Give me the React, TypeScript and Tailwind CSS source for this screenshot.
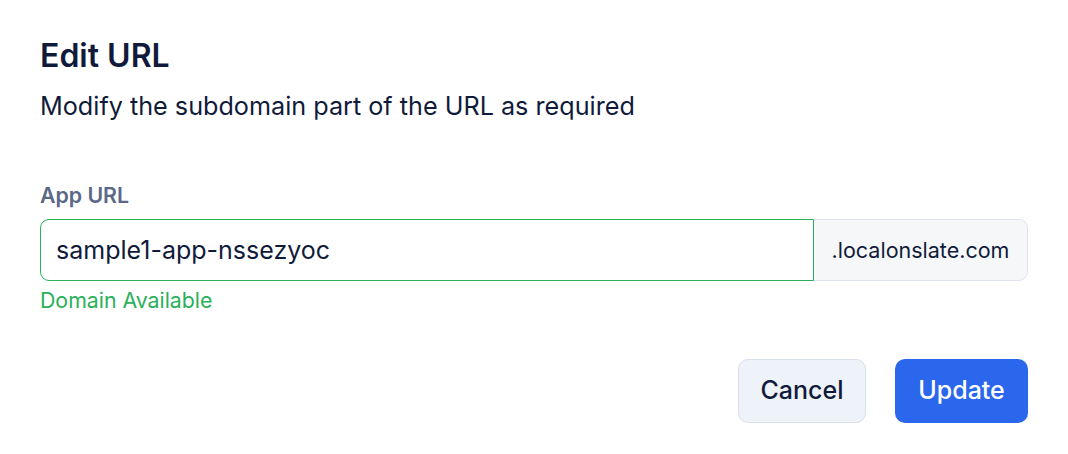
export default function App() {
  return (
    <main
      className="bg-white w-[1068px] h-[454px] px-10 pt-[36px] text-[#101b3b]"
      style={{ fontFamily: "Inter, 'Noto Sans', sans-serif" }}
    >
      {/* header */}
      <h1 className="text-[32px] leading-[40px] font-semibold">Edit URL</h1>
      <p className="mt-[14px] text-[25.2px] leading-[32px]">
        Modify the subdomain part of the URL as required
      </p>

      {/* field */}
      <div className="mt-[59px]">
        <label className="block text-[21.3px] leading-[28px] font-semibold text-[#5b6887]">
          App URL
        </label>
        <div className="mt-[10px] flex h-[62px]">
          <input
            className="flex-1 min-w-0 h-full rounded-l-[9px] border border-[#2bb05a] px-[15px] text-[25px] text-[#101b3b] outline-none"
            defaultValue="sample1-app-nssezyoc"
          />
          <div className="w-[214px] h-full flex items-center justify-center rounded-r-[9px] border border-l-0 border-[#dde2ec] bg-[#f6f7f9] text-[21.5px]">
            .localonslate.com
          </div>
        </div>
        <p className="mt-[5px] text-[21.3px] leading-[28px] text-[#2bb05a]">Domain Available</p>
      </div>

      {/* actions */}
      <div className="mt-[45px] flex justify-end gap-[29px]">
        <button className="h-[64px] w-[128px] rounded-[10px] border border-[#d8deeb] bg-[#eef2f9] text-[25px] font-medium text-[#101b3b]">
          Cancel
        </button>
        <button className="h-[64px] w-[133px] rounded-[10px] bg-[#2b67ec] text-[25px] font-medium text-white">
          Update
        </button>
      </div>
    </main>
  );
}
